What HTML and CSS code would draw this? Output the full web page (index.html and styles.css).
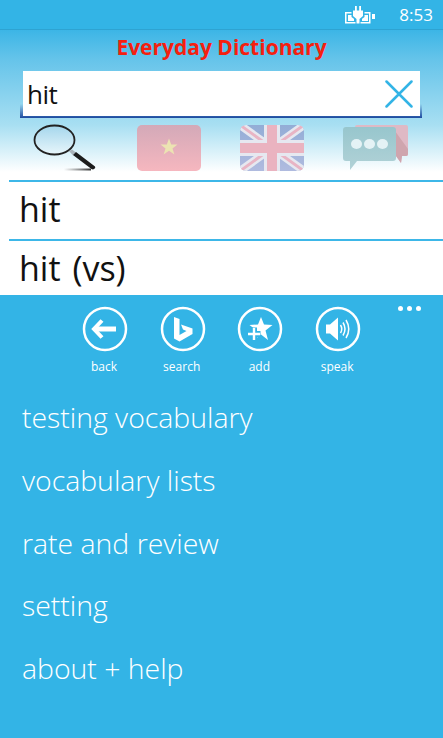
FILE: index.html
```html
<!DOCTYPE html>
<html>
    <head>
        <meta charset="utf-8"/>
        <title>Everyday Dictionary</title>
        <link rel="stylesheet" href="styles.css">
    </head>
    <body>
        <!-- top part with the fade to white -->
        <div class="header">
            <div class="status">
                <svg class="battery" width="31" height="18" viewBox="0 0 31 18">
                    <rect x=".75" y="6.750" width="24" height="10" fill="none" stroke="#fff" stroke-width="1.500"/>
                    <rect x="3" y="9" width="6" height="6" fill="#fff"/>
                    <rect x="17" y="9" width="6" height="6" fill="#fff"/>
                    <rect x="27" y="8" width="3" height="5" fill="#fff"/>
                    <path d="M6.500 4h13v7l-4 3v4h-5v-4l-4-3z" fill="#33b4e6"/>
                    <path d="M10 0h1.800v4.500h2.400v-4.500h1.800v4.500h2v5.500l-3.500 3v4.500h-3v-4.500l-3.500-3v-5.500h2z" fill="#fff"/>
                </svg>
                <span class="clock">8:53</span>
            </div>
            <div class="title">Everyday Dictionary</div>
            <div class="searchwrap">
                <div class="searchbox">
                    <span class="searchtext">hit</span>
                    <svg width="28" height="28" viewBox="0 0 28 28">
                        <path d="M1.500 1.500l25 25M26.500 1.500l-25 25" stroke="#33b4e6" stroke-width="2.500" stroke-linecap="round"/>
                    </svg>
                </div>
            </div>
            <div class="tools">
                <!-- magnifier -->
                <svg class="tool" width="66" height="48" viewBox="0 0 66 48">
                    <defs>
                        <linearGradient id="lens" x1="0" y1="0" x2="0" y2="1">
                            <stop offset="0" stop-color="#a4d6ec"/>
                            <stop offset="1" stop-color="#e8f6fb"/>
                        </linearGradient>
                        <linearGradient id="shade" x1="0" y1="0" x2="1" y2="0">
                            <stop offset="0" stop-color="#555" stop-opacity="0"/>
                            <stop offset="1" stop-color="#333"/>
                        </linearGradient>
                    </defs>
                    <rect x="32" y="44.500" width="27" height="2" fill="url(#shade)"/>
                    <ellipse cx="22.500" cy="16" rx="20" ry="14.500" fill="url(#lens)" stroke="#222" stroke-width="1.800"/>
                    <path d="M37 27l3-1.500 4 3-3 3z" fill="#aab4bb"/>
                    <path d="M41 31l3-3 19 14.500q1 1.500-1 2.500-1 .8-2.500 0z" fill="#1c1c1c"/>
                </svg>
                <!-- vietnam flag -->
                <svg class="tool" width="66" height="48" viewBox="0 0 66 48">
                    <defs>
                        <linearGradient id="red" x1="0" y1="0" x2="0" y2="1">
                            <stop offset="0" stop-color="#d3a9b8"/>
                            <stop offset="1" stop-color="#f6b7bf"/>
                        </linearGradient>
                    </defs>
                    <rect x="1" y="1" width="64" height="46" rx="5" fill="url(#red)"/>
                    <path d="M33 14.500l2.200 6h6.300l-5 3.900 1.900 6.100-5.400-3.700-5.400 3.700 1.900-6.100-5-3.900h6.300z" fill="#ece3b2"/>
                </svg>
                <!-- uk flag -->
                <svg class="tool" width="66" height="48" viewBox="0 0 66 48">
                    <defs>
                        <clipPath id="ukclip"><rect x="1" y="1" width="64" height="46" rx="6"/></clipPath>
                        <linearGradient id="ukblue" x1="0" y1="0" x2="0" y2="1">
                            <stop offset="0" stop-color="#93add6"/>
                            <stop offset="1" stop-color="#b0bbdf"/>
                        </linearGradient>
                    </defs>
                    <g clip-path="url(#ukclip)">
                        <rect x="1" y="1" width="64" height="46" fill="url(#ukblue)"/>
                        <path d="M1 1l64 46M65 1l-64 46" stroke="#e6e8f0" stroke-width="8"/>
                        <path d="M1 1l64 46M65 1l-64 46" stroke="#e8b4c4" stroke-width="3"/>
                        <rect x="25" y="1" width="16" height="46" fill="#e6e8f0"/>
                        <rect x="1" y="16" width="64" height="16" fill="#e6e8f0"/>
                        <rect x="28" y="1" width="10" height="46" fill="#eab3c0"/>
                        <rect x="1" y="19" width="64" height="10" fill="#eab3c0"/>
                    </g>
                </svg>
                <!-- chat bubbles -->
                <svg class="tool" width="66" height="48" viewBox="0 0 66 48">
                    <defs>
                        <linearGradient id="bubble" x1="0" y1="0" x2="0" y2="1">
                            <stop offset="0" stop-color="#97c6cd"/>
                            <stop offset="1" stop-color="#b2d2d7"/>
                        </linearGradient>
                    </defs>
                    <path d="M12 3q0-2 2-2h49q2 0 2 2v27q0 2-2 2h-4l-1 7-5-7h-41z" fill="#dfb9c5"/>
                    <path d="M52 7l13 18v5q0 2-2 2h-4l-1 7-5-7h-1z" fill="#cfa5ae"/>
                    <path d="M3 3h47q3 0 3 3v28q0 3-3 3h-36l-7 9v-9h-4q-3 0-3-3v-28q0-3 3-3z" fill="url(#bubble)"/>
                    <ellipse cx="13.500" cy="20" rx="5.500" ry="5" fill="#e4f2f5"/>
                    <ellipse cx="26.500" cy="20" rx="5.500" ry="5" fill="#e4f2f5"/>
                    <ellipse cx="39.500" cy="20" rx="5.500" ry="5" fill="#e4f2f5"/>
                </svg>
            </div>
        </div>

        <!-- results -->
        <div class="results">
            <div class="result first">hit</div>
            <div class="result">hit (vs)</div>
        </div>

        <!-- app bar -->
        <div class="appbar">
            <div class="dots"><i></i><i></i><i></i></div>
            <div class="buttons">
                <div class="btn">
                    <svg width="46" height="46" viewBox="0 0 46 46">
                        <circle cx="23" cy="23" r="21" fill="none" stroke="#fff" stroke-width="2.500"/>
                        <path d="M20 14.500l-8 8.500 8 8.500" fill="none" stroke="#fff" stroke-width="4"/>
                        <path d="M14 23h20" fill="none" stroke="#fff" stroke-width="5"/>
                    </svg>
                    <span>back</span>
                </div>
                <div class="btn">
                    <svg width="46" height="46" viewBox="0 0 46 46">
                        <circle cx="23" cy="23" r="21" fill="none" stroke="#fff" stroke-width="2.500"/>
                        <path d="M14 11l5.500 2v16l7-4-3.500-1.500-2-5 11.500 4v5.500l-13 7.500-5.500-3z" fill="#fff"/>
                    </svg>
                    <span>search</span>
                </div>
                <div class="btn">
                    <svg width="46" height="46" viewBox="0 0 46 46">
                        <circle cx="23" cy="23" r="21" fill="none" stroke="#fff" stroke-width="2.500"/>
                        <path d="M24 11l3 7.500 8.500.5-7 5.500 2.500 9.500-7-5.500-7 5.500 2.500-9.500-7-5.500 8.500-.5z" fill="#fff"/>
                        <path d="M10.500 28h13M17 21.500v13" stroke="#33b4e6" stroke-width="6" fill="none"/>
                        <path d="M11 28h12M17 22v12" stroke="#fff" stroke-width="2.400" fill="none"/>
                    </svg>
                    <span>add</span>
                </div>
                <div class="btn">
                    <svg width="46" height="46" viewBox="0 0 46 46">
                        <circle cx="23" cy="23" r="21" fill="none" stroke="#fff" stroke-width="2.500"/>
                        <path d="M11 18.500h4l8-7v23l-8-7h-4z" fill="#fff"/>
                        <path d="M25.500 19q2.500 4 0 8M28 16.500q4 6.500 0 13M31 14q5.500 9 0 18" fill="none" stroke="#fff" stroke-width="1.500"/>
                    </svg>
                    <span>speak</span>
                </div>
            </div>
            <div class="menu">
                <div class="menuitem">testing vocabulary</div>
                <div class="menuitem">vocabulary lists</div>
                <div class="menuitem">rate and review</div>
                <div class="menuitem">setting</div>
                <div class="menuitem">about + help</div>
            </div>
        </div>
    </body>
</html>
```

FILE: styles.css
```css
/* the whole page is the phone screen */
body {
    margin: 0;
    width: 443px;
    height: 738px;
    overflow: hidden;
    background-color: #33b4e6;
    font-family: "Open Sans", "Noto Sans", sans-serif;
}

/* status bar + title + search, fades from blue to white */
.header {
    height: 180px;
    background: linear-gradient(#3cb5e6 30px, #66c4ea 60px, #a8dff2 125px, #ffffff 172px);
}

.status {
    height: 29px;
    background-color: #33b4e6;
    border-bottom: 1px solid #2ea3d2;
    display: flex;
    justify-content: flex-end;
    align-items: center;
    color: #ffffff;
}

.battery {
    margin-right: 23px;
}

.clock {
    font-size: 17px;
    margin-right: 10px;
}

.title {
    margin-top: 3px;
    text-align: center;
    color: #f5200f;
    font-weight: bold;
    font-size: 21px;
    line-height: 28px;
}

/* the dark line under the box, it curls up a bit on both ends */
.searchwrap {
    margin: 10px 21px 0 20px;
    padding: 0 2px 2px 3px;
    background: linear-gradient(transparent 70%, #1d4a9f);
}

.searchbox {
    height: 45px;
    background-color: #ffffff;
    display: flex;
    justify-content: space-between;
    align-items: center;
    padding: 0 7px 0 4px;
}

.searchtext {
    font-size: 26px;
    letter-spacing: -0.5px;
    color: #111111;
}

.tools {
    margin-top: 6px;
    padding-left: 32px;
    display: flex;
    gap: 37.500px;
}

/* white list of hits */
.results {
    background-color: #ffffff;
    height: 115px;
    padding-left: 9px;
}

.result {
    height: 56px;
    box-sizing: border-box;
    border-top: 2px solid #3db7e8;
    font-size: 34px;
    word-spacing: 3px;
    line-height: 54px;
    padding-left: 10px;
    color: #111111;
}

.first {
    height: 59px;
}

.appbar {
    position: relative;
    color: #ffffff;
}

/* the three dots on the right */
.dots {
    position: absolute;
    top: 11px;
    right: 22px;
    display: flex;
    gap: 4px;
}

.dots i {
    width: 5px;
    height: 5px;
    background-color: #ffffff;
    border-radius: 50%;
}

.buttons {
    display: flex;
    padding: 11px 0 0 82px;
}

.btn {
    width: 46px;
    margin-right: 31.700px;
    display: flex;
    flex-direction: column;
    align-items: center;
    font-size: 12px;
}

.btn span {
    margin: 6px 2px 0 0;
}

.menu {
    padding: 11px 0 0 22px;
}

.menuitem {
    height: 62.800px;
    font-size: 28.400px;
    line-height: 63px;
    font-weight: 300;
}
```
